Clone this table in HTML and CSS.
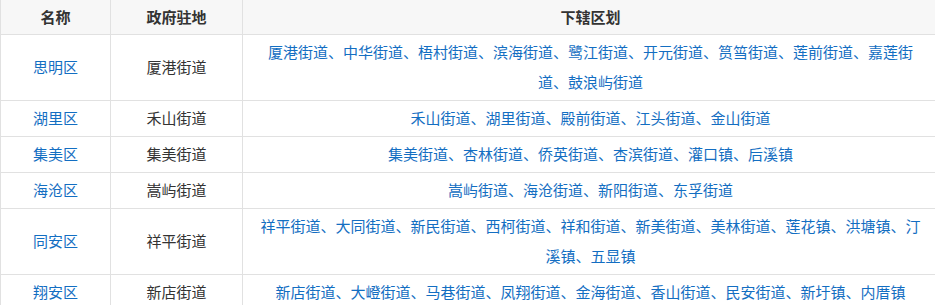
FILE: index.html
```html
<!DOCTYPE html>
<html lang="zh-CN">
<head>
<meta charset="utf-8">
<title>厦门市行政区划</title>
<link rel="stylesheet" href="styles.css">
</head>
<body>
<table class="dist">
  <colgroup>
    <col class="c-name">
    <col class="c-seat">
    <col class="c-sub">
  </colgroup>
  <thead>
    <tr><th>名称</th><th>政府驻地</th><th>下辖区划</th></tr>
  </thead>
  <tbody>
    <tr><td class="link">思明区</td><td>厦港街道</td><td class="link">厦港街道、中华街道、梧村街道、滨海街道、鹭江街道、开元街道、筼筜街道、莲前街道、嘉莲街道、鼓浪屿街道</td></tr>
    <tr><td class="link">湖里区</td><td>禾山街道</td><td class="link">禾山街道、湖里街道、殿前街道、江头街道、金山街道</td></tr>
    <tr><td class="link">集美区</td><td>集美街道</td><td class="link">集美街道、杏林街道、侨英街道、杏滨街道、灌口镇、后溪镇</td></tr>
    <tr><td class="link">海沧区</td><td>嵩屿街道</td><td class="link">嵩屿街道、海沧街道、新阳街道、东孚街道</td></tr>
    <tr><td class="link">同安区</td><td>祥平街道</td><td class="link">祥平街道、大同街道、新民街道、西柯街道、祥和街道、新美街道、美林街道、莲花镇、洪塘镇、汀溪镇、五显镇</td></tr>
    <tr><td class="link">翔安区</td><td>新店街道</td><td class="link">新店街道、大嶝街道、马巷街道、凤翔街道、金海街道、香山街道、民安街道、新圩镇、内厝镇</td></tr>
  </tbody>
</table>
</body>
</html>
```

FILE: styles.css
```css
html, body {
  margin: 0;
  padding: 0;
  background: #fff;
  overflow: hidden;
}

.dist {
  border-collapse: collapse;
  table-layout: fixed;
  width: 938px;
  font-family: "Noto Sans CJK SC", "Noto Sans", sans-serif;
  font-size: 15px;
  color: #333;
}

.c-name { width: 110px; }
.c-seat { width: 132px; }
.c-sub { width: 696px; }

.dist th,
.dist td {
  border: 1px solid #e1e1e1;
  text-align: center;
  vertical-align: middle;
  line-height: 30px;
  padding: 2px 12px 3px;
}

.dist th {
  border-top: none;
  background: #f7f7f7;
  font-weight: bold;
  padding: 2px 12px 2px;
}

.dist td.link {
  color: #136ec2;
}
```
